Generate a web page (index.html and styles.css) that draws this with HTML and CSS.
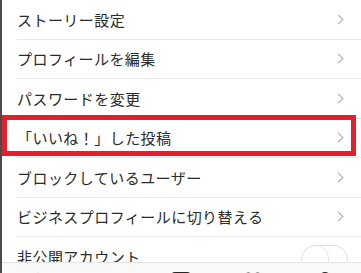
FILE: index.html
```html
<!DOCTYPE html>
<html lang="ja">
<head>
    <meta charset="UTF-8">
    <meta name="viewport" content="width=device-width, initial-scale=1.0">
    <title>オプション</title>
    <link rel="stylesheet" href="styles.css">
</head>
<body>
    <div class="screen">
        <ul class="menu">
            <li class="menu-item"><span>ストーリー設定</span><i class="chevron"></i></li>
            <li class="menu-item"><span>プロフィールを編集</span><i class="chevron"></i></li>
            <li class="menu-item"><span>パスワードを変更</span><i class="chevron"></i></li>
            <li class="menu-item"><span>「いいね！」した投稿</span><i class="chevron"></i></li>
            <li class="menu-item"><span>ブロックしているユーザー</span><i class="chevron"></i></li>
            <li class="menu-item"><span>ビジネスプロフィールに切り替える</span><i class="chevron"></i></li>
            <li class="menu-item"><span>非公開アカウント</span><span class="switch"><span class="knob"></span></span></li>
        </ul>

        <div class="highlight"></div>

        <nav class="tabbar">
            <svg class="tab" width="22" height="22" viewBox="0 0 22 22"><path d="M3 21V9l8-7 8 7v12" fill="none" stroke="#262626" stroke-width="2"/></svg>
            <svg class="tab" width="22" height="22" viewBox="0 0 22 22"><circle cx="10" cy="10" r="7.5" fill="none" stroke="#262626" stroke-width="2"/></svg>
            <svg class="tab" width="22" height="22" viewBox="0 0 22 22"><rect x="2" y="1" width="18" height="18" rx="3" fill="none" stroke="#262626" stroke-width="2"/></svg>
            <svg class="tab" width="22" height="22" viewBox="0 0 22 22"><path d="M11 20S2 14 2 7.5A4.5 4.5 0 0 1 11 5a4.5 4.5 0 0 1 9 2.5C20 14 11 20 11 20z" fill="none" stroke="#262626" stroke-width="2"/></svg>
            <svg class="tab" width="22" height="22" viewBox="0 0 22 22"><circle cx="11" cy="6" r="5" fill="none" stroke="#262626" stroke-width="2"/></svg>
        </nav>
    </div>
</body>
</html>
```

FILE: styles.css
```css
body {
    margin: 0;
    padding: 0;
    background-color: #ffffff;
    font-family: "Noto Sans CJK JP", "Noto Sans", sans-serif;
    color: #2b2b2b;
}
.screen {
    position: relative;
    width: 361px;
    height: 273px;
    overflow: hidden;
    box-sizing: border-box;
    border-left: 2px solid #4a4a4a;
}
.menu {
    list-style: none;
    margin: 0;
    padding: 0 0 0 15px;
}
.menu-item {
    display: flex;
    align-items: center;
    justify-content: space-between;
    height: 39.5px;
    box-sizing: border-box;
    border-bottom: 1px solid #e8e8e8;
    padding-right: 17px;
    font-size: 15px;
    letter-spacing: 0.45px;
}
.chevron {
    width: 6px;
    height: 6px;
    border-top: 1.3px solid #a6a6a6;
    border-right: 1.3px solid #a6a6a6;
    transform: rotate(45deg);
    margin-right: 2px;
}
.switch {
    position: relative;
    width: 47px;
    height: 29px;
    box-sizing: border-box;
    border: 1.5px solid #dedede;
    border-radius: 15px;
    margin-right: -4px;
    margin-top: 6px;
}
.knob {
    position: absolute;
    left: 0;
    top: 0;
    width: 26px;
    height: 26px;
    border-radius: 50%;
    box-shadow: 1px 0 1px rgba(0, 0, 0, 0.12);
}
.highlight {
    position: absolute;
    left: 0;
    top: 115px;
    width: 354px;
    height: 41px;
    box-sizing: border-box;
    border: 5px solid #e3202a;
}
.tabbar {
    position: absolute;
    left: 0;
    right: 0;
    top: 262px;
    height: 50px;
    display: flex;
    justify-content: space-around;
    padding-top: 9px;
    box-sizing: border-box;
    background-color: #f9f9f9;
    border-top: 1px solid #e4e4e4;
}
```
